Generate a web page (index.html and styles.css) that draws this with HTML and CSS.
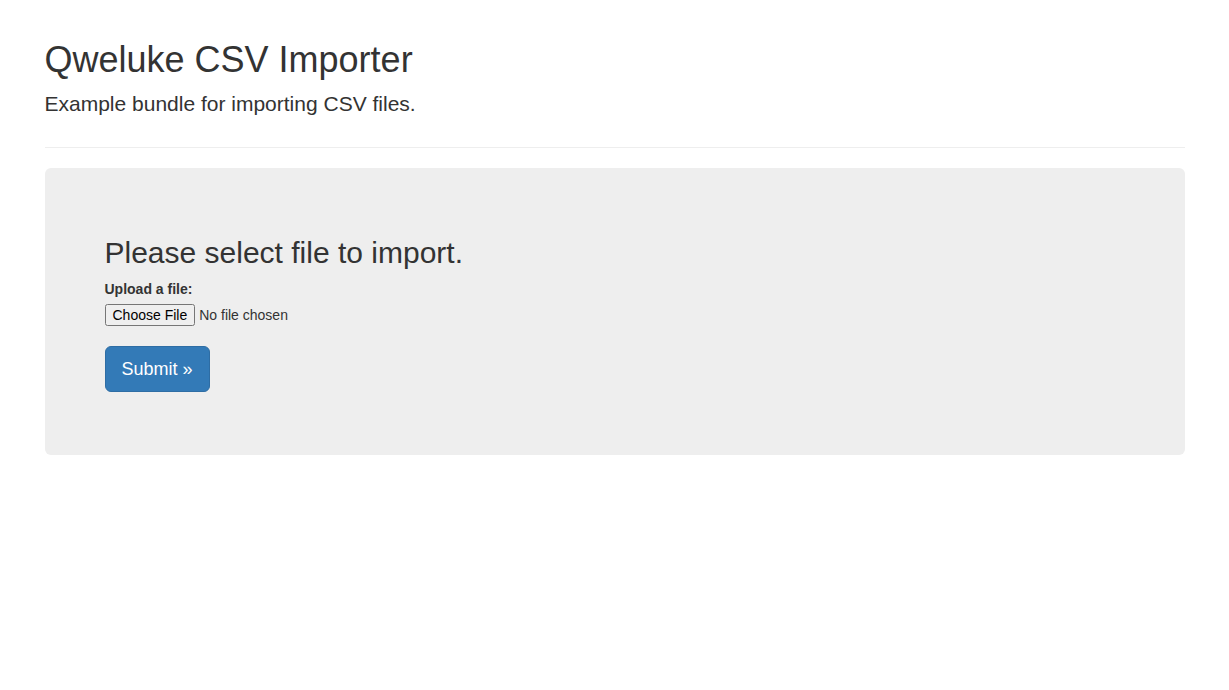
FILE: index.html
```html
<!DOCTYPE html>
<html lang="en">
<head>
<meta charset="utf-8">
<title>Qweluke CSV Importer</title>
<link rel="stylesheet" href="styles.css">
</head>
<body>
<div class="container">
  <div class="page-header">
    <h1 class="title">Qweluke CSV Importer</h1>
    <p class="lead">Example bundle for importing CSV files.</p>
  </div>
  <div class="jumbotron">
    <h2 class="subtitle">Please select file to import.</h2>
    <form class="upload-form" action="#" method="post" enctype="multipart/form-data">
      <div class="form-group">
        <label class="field-label" for="file">Upload a file:</label>
        <input class="file-input" type="file" id="file" name="file">
      </div>
      <div class="actions">
        <button class="btn-submit" type="submit">Submit &raquo;</button>
      </div>
    </form>
  </div>
</div>
</body>
</html>
```

FILE: styles.css
```css
* {
  box-sizing: border-box;
}

html, body {
  margin: 0;
  padding: 0;
  background: #fff;
}

body {
  font-family: "Liberation Sans", Arial, Helvetica, sans-serif;
  font-size: 14px;
  line-height: 1.42857143;
  color: #333;
}

.container {
  max-width: 1170px;
  margin: 0 auto;
  padding: 0 15px;
}

.page-header {
  margin: 40px 0 20px;
  padding-bottom: 9px;
  border-bottom: 1px solid #eee;
}

.title {
  margin: 20px 0 9px;
  font-size: 36px;
  font-weight: 500;
  line-height: 1.1;
}

.lead {
  margin: 0 0 20px;
  font-size: 21px;
  font-weight: 300;
  line-height: 1.4;
}

.jumbotron {
  padding: 48px 60px;
  margin-bottom: 30px;
  background: #eee;
  border-radius: 6px;
}

.subtitle {
  margin: 20px 0 10px;
  font-size: 30px;
  font-weight: 500;
  line-height: 1.1;
}

.upload-form {
  margin: 0;
}

.form-group {
  margin-bottom: 20px;
}

.field-label {
  display: inline-block;
  margin-bottom: 5px;
  font-weight: 700;
}

.file-input {
  display: block;
  margin: 0;
  font: inherit;
  font-size: 14px;
  line-height: normal;
  color: inherit;
}

.actions {
  margin-bottom: 15px;
}

.btn-submit {
  display: inline-block;
  margin: 0;
  padding: 10px 16px;
  font-family: inherit;
  font-size: 18px;
  line-height: 1.3333333;
  color: #fff;
  background-color: #337ab7;
  border: 1px solid #2e6da4;
  border-radius: 6px;
  cursor: pointer;
}
```
